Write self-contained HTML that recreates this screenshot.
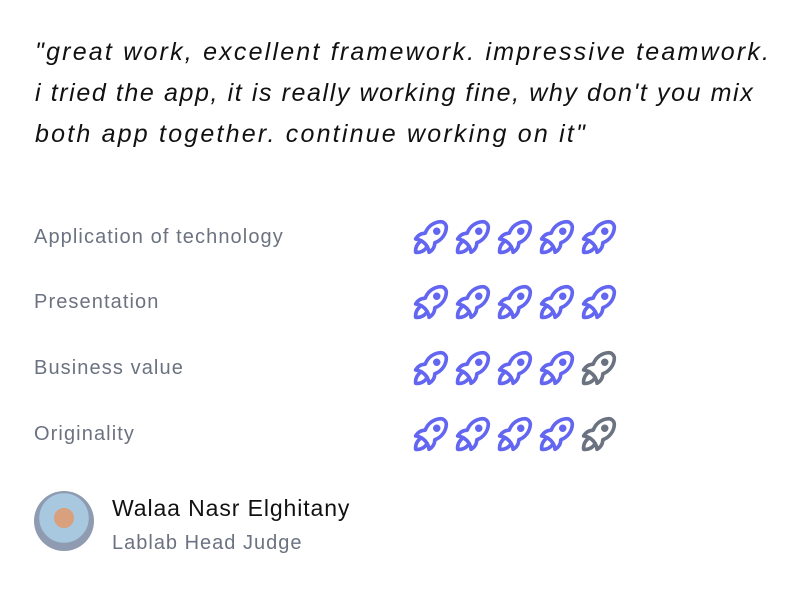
<!DOCTYPE html>
<html><head><style>
body{margin:0;background:#fff;font-family:"Liberation Sans",sans-serif;}
.wrap{position:relative;width:811px;height:604px;overflow:hidden;background:#fff;}
.q{position:absolute;left:35px;top:32px;white-space:nowrap;font-style:italic;font-size:25px;line-height:41px;color:#111;letter-spacing:2.2px}
.row{position:absolute;left:34px;height:40px;width:600px}
.row .l{position:absolute;left:0;top:8px;font-size:20px;color:#6b7280;letter-spacing:1.1px}
.row .icons{position:absolute;left:374px;top:-4px;display:flex}
svg.r{width:46px;height:46px;margin-right:-4px;fill:none;stroke-width:1.9;stroke-linecap:round;stroke-linejoin:round}
.on{stroke:#6366f1}.off{stroke:#6b7280}
.av{position:absolute;left:34px;top:491px;width:60px;height:60px;border-radius:50%;background:radial-gradient(circle at 50% 45%,#d9a07e 0 22%,#a8c8e0 23% 55%,#8f9bb0 56%)}
.n{position:absolute;left:112px;top:495px;font-size:23px;color:#111;letter-spacing:0.9px}
.t{position:absolute;left:112px;top:532px;font-size:20px;color:#6b7280;letter-spacing:1px}
</style></head><body><div class="wrap">
<div class="q">"great work, excellent framework. impressive teamwork.<br><span style="letter-spacing:1.6px">i tried the app, it is really working fine, why don't you mix</span><br>both app together. continue working on it"</div>
<svg style="display:none"><symbol id="rk" viewBox="0 0 24 24"><path d="M4 13a8 8 0 0 1 7 7a6 6 0 0 0 3 -5a9 9 0 0 0 6 -8a3 3 0 0 0 -3 -3a9 9 0 0 0 -8 6a6 6 0 0 0 -5 3"/><path d="M7 14a6 6 0 0 0 -3 6a6 6 0 0 0 6 -3"/><circle cx="15" cy="9" r="1"/></symbol></svg>
<div class="row" style="top:218px"><div class="l">Application of technology</div><div class="icons"><svg class="r on"><use href="#rk"/></svg><svg class="r on"><use href="#rk"/></svg><svg class="r on"><use href="#rk"/></svg><svg class="r on"><use href="#rk"/></svg><svg class="r on"><use href="#rk"/></svg></div></div>
<div class="row" style="top:283px"><div class="l">Presentation</div><div class="icons"><svg class="r on"><use href="#rk"/></svg><svg class="r on"><use href="#rk"/></svg><svg class="r on"><use href="#rk"/></svg><svg class="r on"><use href="#rk"/></svg><svg class="r on"><use href="#rk"/></svg></div></div>
<div class="row" style="top:349px"><div class="l">Business value</div><div class="icons"><svg class="r on"><use href="#rk"/></svg><svg class="r on"><use href="#rk"/></svg><svg class="r on"><use href="#rk"/></svg><svg class="r on"><use href="#rk"/></svg><svg class="r off"><use href="#rk"/></svg></div></div>
<div class="row" style="top:415px"><div class="l">Originality</div><div class="icons"><svg class="r on"><use href="#rk"/></svg><svg class="r on"><use href="#rk"/></svg><svg class="r on"><use href="#rk"/></svg><svg class="r on"><use href="#rk"/></svg><svg class="r off"><use href="#rk"/></svg></div></div>
<div class="av"></div>
<div class="n">Walaa Nasr Elghitany</div>
<div class="t">Lablab Head Judge</div>
</div></body></html>
